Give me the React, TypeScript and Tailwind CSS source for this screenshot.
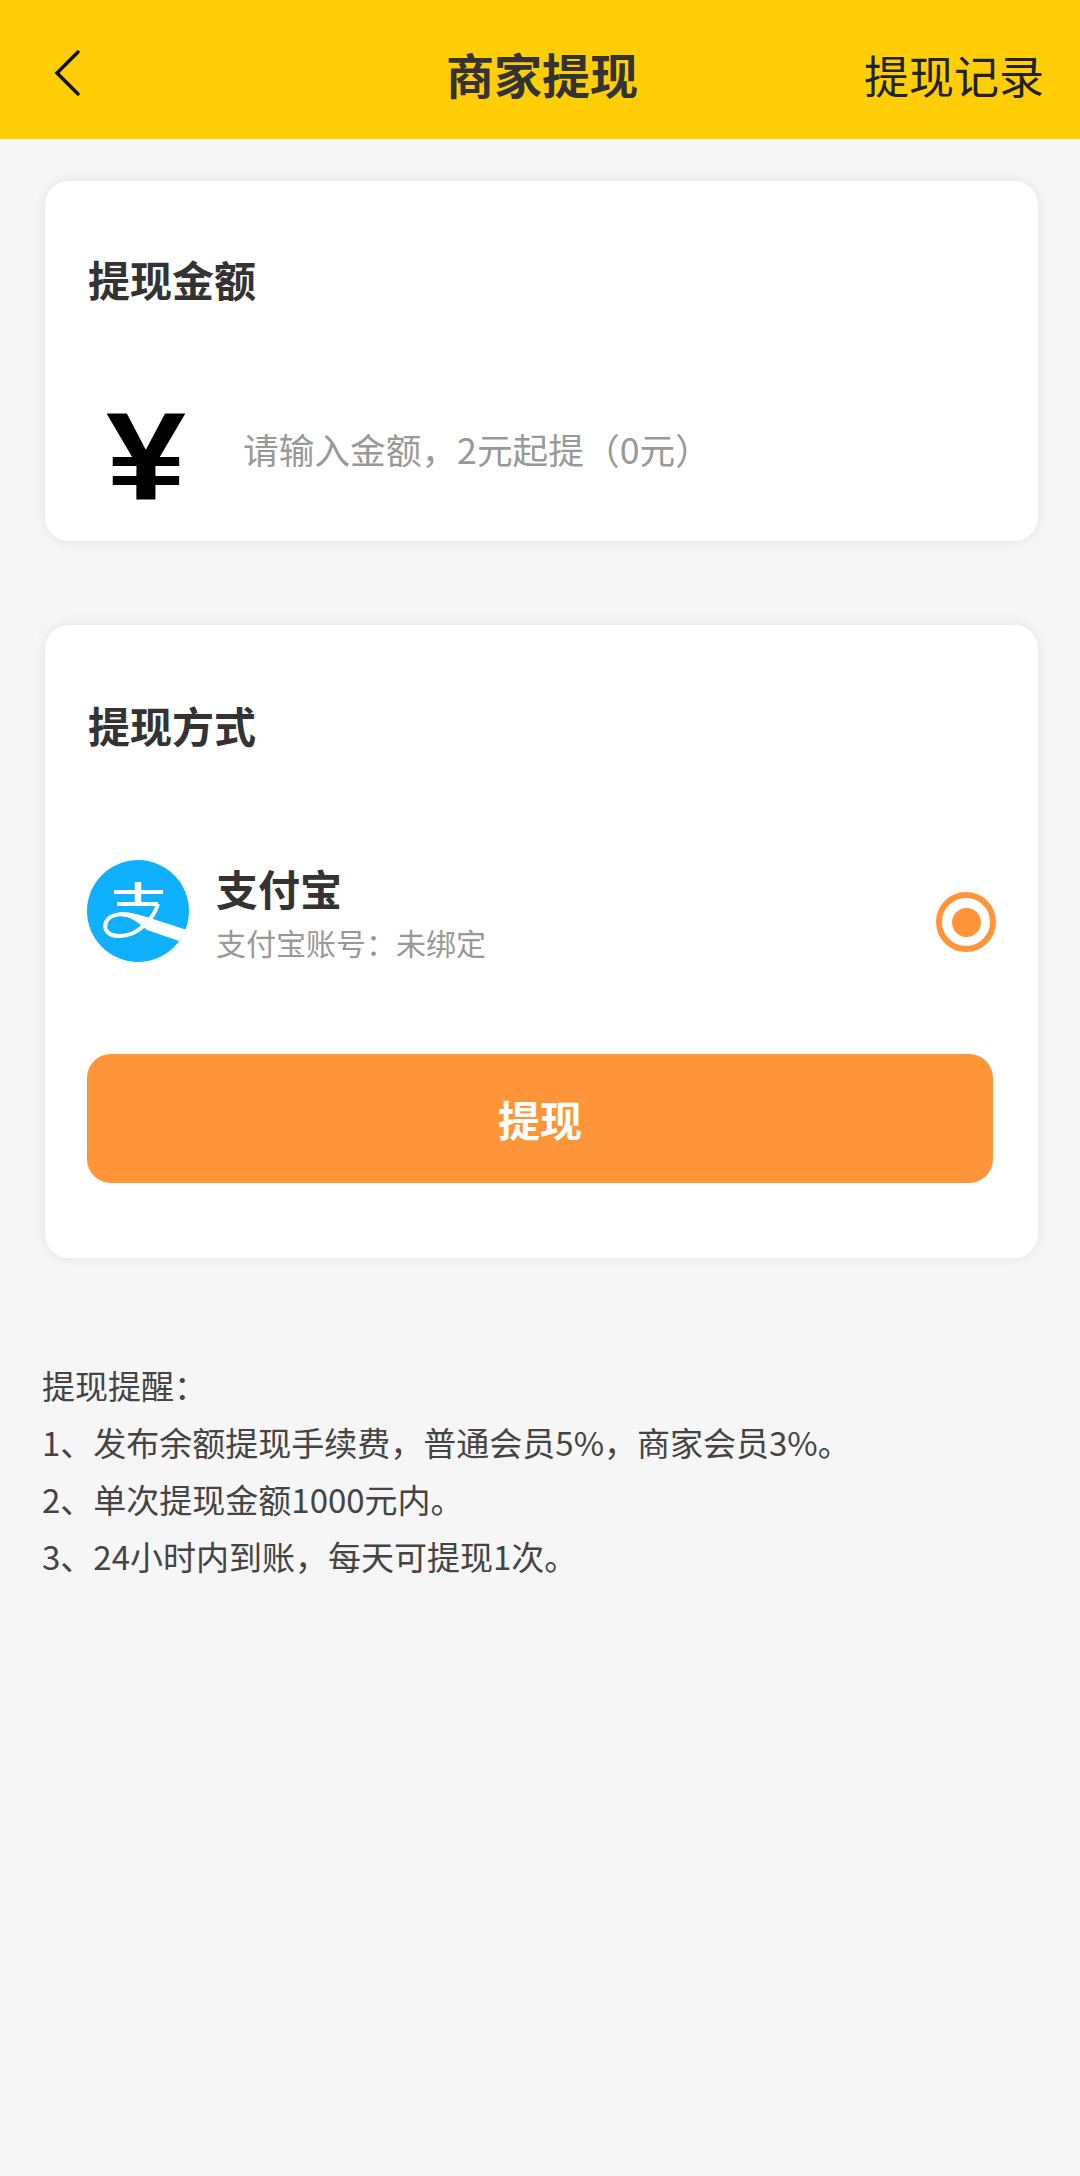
const AlipayLogo = () => (
    <svg width="102" height="102" viewBox="0 0 102 102">
        <circle cx="51" cy="51" r="51" fill="#0fb0fd" />
        <path d="M27 32h49M30 44h41" fill="none" stroke="#fff" strokeWidth="4" />
        <path d="M51 22v22" fill="none" stroke="#fff" strokeWidth="6.5" />
        <path d="M71 44C66 60 50 76 33 76C22 76 17 71 18.5 64C20 57 28 54 37 54" fill="none" stroke="#fff" strokeWidth="4" />
        <path d="M35 52C46 52 56 56 66 59L100 70L92 81L60 70C50 62 44 56.5 35 56.5Z" fill="#fff" />
    </svg>
);

const App = () => {
    return (
        <div className="min-h-[2176px] w-[1080px] bg-[#f6f6f6] font-['Noto_Sans_CJK_SC',sans-serif]">
            <div className="flex h-[139px] items-center justify-between bg-[#ffce06] pt-[6px] pr-[36px] pl-[52px]">
                <svg width="30" height="48" viewBox="0 0 30 48" fill="none" stroke="#111" strokeWidth="3.5" strokeLinecap="round">
                    <path d="M26 3L5 24L26 45" />
                </svg>
                <div className="ml-[138px] text-[48px] leading-none font-bold text-[#333]">商家提现</div>
                <div className="mt-[4px] text-[45px] leading-none text-[#222]">提现记录</div>
            </div>

            <div className="mx-[45px] mt-[42px] h-[360px] w-[993px] rounded-[24px] bg-white pt-[68px] pl-[43px] shadow-[0_0_14px_rgba(0,0,0,0.08)]">
                <div className="text-[42px] leading-[60px] font-bold text-[#333]">提现金额</div>
                <div className="mt-[97px] flex items-center">
                    <span className="ml-[18px] w-[137px] origin-left scale-x-[1.15] font-['Liberation_Sans',sans-serif] text-[125px] leading-[100px] font-bold text-black">¥</span>
                    <span className="mt-[-14px] text-[35.7px] leading-none text-[#999]">请输入金额，2元起提（0元）</span>
                </div>
            </div>

            <div className="mx-[45px] mt-[84px] h-[633px] w-[993px] rounded-[24px] bg-white pt-[70px] pl-[42px] shadow-[0_0_14px_rgba(0,0,0,0.08)]">
                <div className="ml-[1px] text-[42px] leading-[60px] font-bold text-[#333]">提现方式</div>
                <div className="mt-[105px] flex items-center pr-[42px]">
                    <AlipayLogo />
                    <div className="ml-[27px] flex-1">
                        <div className="text-[42px] leading-[56px] font-bold text-[#333]">支付宝</div>
                        <div className="mt-[6px] text-[30px] leading-[40px] text-[#999]">支付宝账号：未绑定</div>
                    </div>
                    <div className="mt-[22px] flex h-[60px] w-[60px] items-center justify-center rounded-full border-[6px] border-[#ff9538]">
                        <div className="h-[29px] w-[29px] rounded-full bg-[#ff9538]" />
                    </div>
                </div>
                <div className="mt-[92px] flex h-[129px] w-[906px] items-center justify-center rounded-[24px] bg-[#ff9538] text-[42px] font-bold text-white">
                    提现
                </div>
            </div>

            <div className="mt-[99px] ml-[42px] text-[33px] leading-[57px] text-[#444]">
                <div>提现提醒：</div>
                <div>1、发布余额提现手续费，普通会员5%，商家会员3%。</div>
                <div>2、单次提现金额1000元内。</div>
                <div>3、24小时内到账，每天可提现1次。</div>
            </div>
        </div>
    );
};

export default App;
